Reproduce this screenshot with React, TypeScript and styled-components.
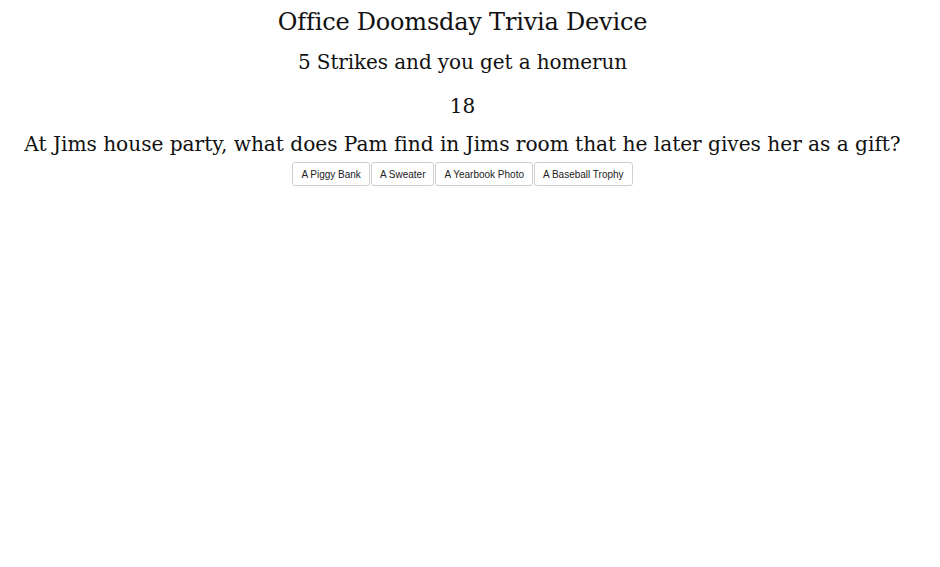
import React from "react";
import styled, { createGlobalStyle } from "styled-components";

const Global = createGlobalStyle`
  html, body { margin: 0; padding: 0; background: #fff; }
  body { font-family: "DejaVu Serif", serif; color: #111; }
`;

const Page = styled.div`
  width: 925px;
  display: flex;
  flex-direction: column;
  align-items: center;
  text-align: center;
  padding-top: 6px;
`;

const Title = styled.h1`
  margin: 0;
  font-size: 24px;
  font-weight: normal;
  line-height: 32px;
  letter-spacing: -0.2px;
`;

const Subtitle = styled.h2`
  margin: 10px 0 0;
  font-size: 20px;
  font-weight: normal;
  line-height: 28px;
  letter-spacing: -0.1px;
`;

const Score = styled.div`
  margin-top: 16px;
  font-size: 20px;
  line-height: 28px;
`;

const Question = styled.div`
  margin-top: 10px;
  font-size: 20.2px;
  line-height: 28px;
  letter-spacing: -0.05px;
`;

const Answers = styled.div`
  display: flex;
  gap: 1px;
  margin-top: 4px;
`;

const Answer = styled.button`
  height: 24px;
  padding: 0 8px;
  font-family: "Liberation Sans", Arial, sans-serif;
  font-size: 10px;
  color: #222;
  background: #fff;
  border: 1px solid #cfcfcf;
  border-radius: 3px;
  cursor: pointer;
`;

const answers = ["A Piggy Bank", "A Sweater", "A Yearbook Photo", "A Baseball Trophy"];

export default function App() {
  return (
    <Page>
      <Global />
      <Title>Office Doomsday Trivia Device</Title>
      <Subtitle>5 Strikes and you get a homerun</Subtitle>
      <Score>18</Score>
      <Question>
        At Jims house party, what does Pam find in Jims room that he later gives her as a gift?
      </Question>
      <Answers>
        {answers.map((a) => (
          <Answer key={a}>{a}</Answer>
        ))}
      </Answers>
    </Page>
  );
}
